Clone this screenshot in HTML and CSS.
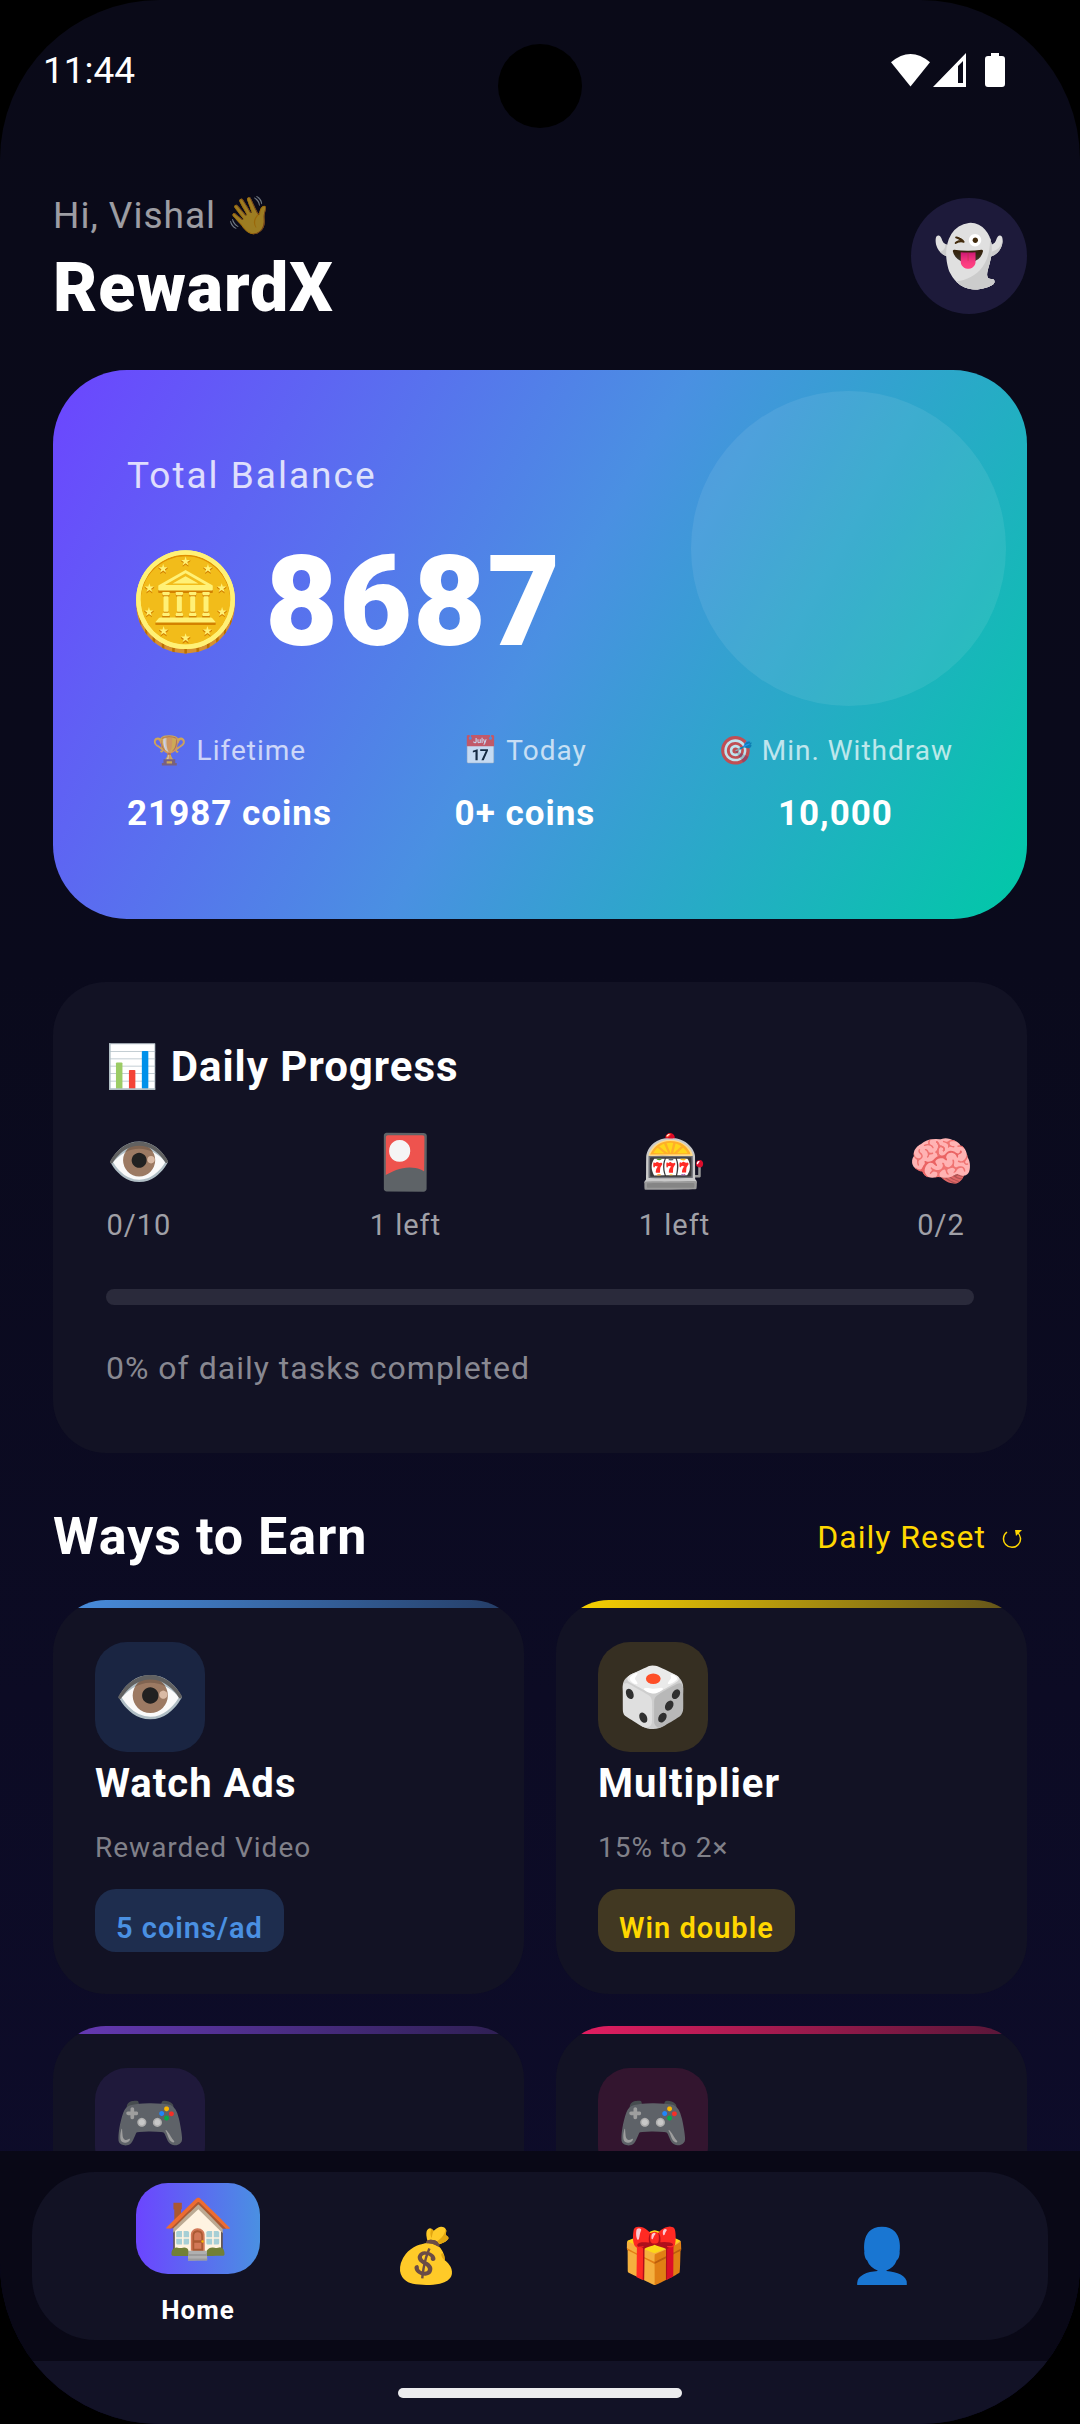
FILE: index.html
```html
<!DOCTYPE html>
<html lang="en">
<head>
    <meta charset="UTF-8">
    <meta name="viewport" content="width=device-width, initial-scale=1.0">
    <title>RewardX</title>
    <link rel="stylesheet" href="styles.css">
</head>
<body>
    <div class="screen">
        <div class="camera"></div>

        <div class="status-bar">
            <span class="time">11:44</span>
            <div class="status-icons">
                <svg class="wifi" viewBox="0 0 40 34"><path d="M20 34 L0 9 Q20 -8 40 9 Z" fill="#fff"/></svg>
                <svg class="signal" viewBox="0 0 33 34"><path fill-rule="evenodd" d="M33 0 V34 H0 Z M30 8 L25 13 V30 H30 Z" fill="#fff"/></svg>
                <svg class="battery" viewBox="0 0 20 34"><path d="M6 0 H14 V3 H17 Q20 3 20 6 V31 Q20 34 17 34 H3 Q0 34 0 31 V6 Q0 3 3 3 H6 Z" fill="#fff"/></svg>
            </div>
        </div>

        <main class="content">
            <header class="header">
                <div>
                    <p class="greeting">Hi, Vishal 👋</p>
                    <h1 class="app-name">RewardX</h1>
                </div>
                <button class="avatar" aria-label="Profile">👻</button>
            </header>

            <section class="balance-card">
                <p class="balance-label">Total Balance</p>
                <div class="balance-row">
                    <span class="coin">🪙</span>
                    <span class="balance-amount">8687</span>
                </div>
                <div class="stats">
                    <div class="stat">
                        <p class="stat-label">🏆 Lifetime</p>
                        <p class="stat-value">21987 coins</p>
                    </div>
                    <div class="stat">
                        <p class="stat-label">📅 Today</p>
                        <p class="stat-value">0+ coins</p>
                    </div>
                    <div class="stat">
                        <p class="stat-label">🎯 Min. Withdraw</p>
                        <p class="stat-value">10,000</p>
                    </div>
                </div>
            </section>

            <section class="progress-card">
                <h2 class="progress-title">📊 Daily Progress</h2>
                <div class="tasks">
                    <div class="task">
                        <span class="task-icon">👁️</span>
                        <span class="task-count">0/10</span>
                    </div>
                    <div class="task">
                        <span class="task-icon">🎴</span>
                        <span class="task-count">1 left</span>
                    </div>
                    <div class="task">
                        <span class="task-icon">🎰</span>
                        <span class="task-count">1 left</span>
                    </div>
                    <div class="task">
                        <span class="task-icon">🧠</span>
                        <span class="task-count">0/2</span>
                    </div>
                </div>
                <div class="progress-track">
                    <div class="progress-fill" style="width: 0%"></div>
                </div>
                <p class="progress-text">0% of daily tasks completed</p>
            </section>

            <div class="section-head">
                <h2 class="section-title">Ways to Earn</h2>
                <button class="reset">
                    Daily Reset
                    <svg class="reset-icon" viewBox="0 0 20 20"><path d="M5 3 A8.500 8.500 0 1 0 15 3" fill="none" stroke="#ffd700" stroke-width="1.500"/><path d="M13 1 H20 L14 7 Z" fill="#ffd700"/></svg>
                </button>
            </div>

            <div class="earn-grid">
                <a href="#" class="earn-card blue">
                    <span class="earn-icon">👁️</span>
                    <h3 class="earn-title">Watch Ads</h3>
                    <p class="earn-sub">Rewarded Video</p>
                    <span class="badge">5 coins/ad</span>
                </a>
                <a href="#" class="earn-card yellow">
                    <span class="earn-icon">🎲</span>
                    <h3 class="earn-title">Multiplier</h3>
                    <p class="earn-sub">15% to 2×</p>
                    <span class="badge">Win double</span>
                </a>
                <a href="#" class="earn-card purple">
                    <span class="earn-icon">🎮</span>
                </a>
                <a href="#" class="earn-card pink">
                    <span class="earn-icon">🎮</span>
                </a>
            </div>
        </main>

        <footer class="bottom">
            <nav class="tab-bar">
                <button class="tab active">
                    <span class="tab-icon">🏠</span>
                    <span class="tab-label">Home</span>
                </button>
                <button class="tab" aria-label="Wallet"><span class="tab-icon">💰</span></button>
                <button class="tab" aria-label="Rewards"><span class="tab-icon">🎁</span></button>
                <button class="tab" aria-label="Account"><span class="tab-icon">👤</span></button>
            </nav>
        </footer>
        <div class="gesture-bar"><div class="handle"></div></div>
    </div>
</body>
</html>
```
FILE: styles.css
```css
* {
    box-sizing: border-box;
    margin: 0;
    padding: 0;
}

body {
    background: #000;
    color: #fff;
    font-family: Roboto, "Noto Color Emoji", sans-serif;
    letter-spacing: 1px;
}

button {
    border: none;
    background: none;
    color: inherit;
    font: inherit;
    letter-spacing: inherit;
    cursor: pointer;
}

.screen {
    position: relative;
    display: flex;
    flex-direction: column;
    height: 100vh;
    overflow: hidden;
    border-radius: 160px;
    background: linear-gradient(#0a0a18, #0a0a1c 40%, #0e0c2c);
}

/* status bar */

.camera {
    position: absolute;
    top: 44px;
    left: 50%;
    width: 84px;
    height: 84px;
    margin-left: -42px;
    border-radius: 50%;
    background: #000;
}

.status-bar {
    display: flex;
    justify-content: space-between;
    align-items: center;
    height: 140px;
    padding: 0 75px 0 43px;
    flex-shrink: 0;
}

.time {
    font-size: 37px;
    letter-spacing: 0;
}

.status-icons {
    display: flex;
    align-items: center;
}

.wifi {
    width: 39px;
    height: 34px;
}

.signal {
    width: 33px;
    height: 34px;
    margin-left: 3px;
}

.battery {
    width: 20px;
    height: 34px;
    margin-left: 19px;
}

/* content */

.content {
    flex: 1;
    min-height: 0;
    overflow: hidden;
    padding: 48px 53px 0;
}

.header {
    display: flex;
    justify-content: space-between;
    align-items: flex-start;
    margin-bottom: 38px;
}

.greeting {
    font-size: 37px;
    line-height: 56px;
    opacity: 0.6;
}

.app-name {
    font-size: 68px;
    line-height: 88px;
    font-weight: 900;
}

.avatar {
    width: 116px;
    height: 116px;
    margin-top: 10px;
    border-radius: 50%;
    background: #1d1a3a;
    font-size: 58px;
    line-height: 116px;
    letter-spacing: 0;
}

.balance-card {
    position: relative;
    padding: 74px;
    margin-bottom: 63px;
    border-radius: 74px;
    background: linear-gradient(119deg, #6c45ff, #4a90e2 50%, #00c9a7);
}

.balance-card::before {
    content: "";
    position: absolute;
    top: 21px;
    right: 21px;
    width: 315px;
    height: 315px;
    border-radius: 50%;
    background: rgba(255, 255, 255, 0.08);
}

.balance-label {
    font-size: 37px;
    line-height: 64px;
    letter-spacing: 2px;
    opacity: 0.8;
}

.balance-row {
    display: flex;
    align-items: center;
    gap: 21px;
    margin: 20px 0 55px;
    line-height: 148px;
}

.coin {
    font-size: 94px;
    letter-spacing: 0;
}

.balance-amount {
    font-size: 126px;
    font-weight: 900;
}

.stats {
    display: flex;
    justify-content: space-between;
    text-align: center;
}

.stat-label {
    margin-bottom: 12px;
    font-size: 28px;
    line-height: 40px;
    opacity: 0.7;
}

.stat-value {
    font-size: 35px;
    line-height: 62px;
    font-weight: 700;
}

/* daily progress */

.progress-card {
    padding: 53px;
    margin-bottom: 52px;
    border-radius: 53px;
    background: #121224;
}

.progress-title {
    margin-bottom: 31px;
    font-size: 42px;
    line-height: 64px;
    font-weight: 700;
}

.tasks {
    display: flex;
    justify-content: space-between;
    margin-bottom: 44px;
}

.task {
    display: flex;
    flex-direction: column;
    align-items: center;
    gap: 11px;
}

.task-icon {
    font-size: 53px;
    line-height: 64px;
    letter-spacing: 0;
}

.task-count {
    color: #a0a0a7;
    font-size: 29px;
    line-height: 40px;
}

.progress-track {
    height: 16px;
    margin-bottom: 31px;
    border-radius: 8px;
    background: #2a2a3b;
    overflow: hidden;
}

.progress-fill {
    height: 100%;
    background: #4a90e2;
}

.progress-text {
    color: #888891;
    font-size: 32px;
    line-height: 64px;
}

/* ways to earn */

.section-head {
    display: flex;
    justify-content: space-between;
    align-items: center;
    margin-bottom: 31px;
}

.section-title {
    font-size: 52px;
    line-height: 64px;
    font-weight: 700;
}

.reset {
    display: flex;
    align-items: center;
    gap: 16px;
    padding-right: 5px;
    color: #ffd700;
    font-size: 32px;
    line-height: 44px;
}

.reset-icon {
    width: 20px;
    height: 20px;
    margin-top: 4px;
}

.earn-grid {
    display: grid;
    grid-template-columns: 1fr 1fr;
    gap: 32px;
}

.earn-card {
    position: relative;
    display: flex;
    flex-direction: column;
    align-items: flex-start;
    padding: 42px;
    border-radius: 53px;
    background: #121224;
    color: #fff;
    text-decoration: none;
    overflow: hidden;
}

.earn-card::before {
    content: "";
    position: absolute;
    top: 0;
    left: 0;
    right: 0;
    height: 8px;
    background: linear-gradient(90deg, var(--accent), var(--accent-end));
}

.blue {
    --accent: #4a90e2;
    --accent-end: #233a62;
    --icon-bg: #1a2542;
    --badge-bg: #1e2d4e;
}

.yellow {
    --accent: #ffd700;
    --accent-end: #5d4f1b;
    --icon-bg: #362f22;
    --badge-bg: #413822;
}

.purple {
    --accent: #673ab7;
    --accent-end: #2c1e4f;
    --icon-bg: #1f193b;
    --badge-bg: #231b42;
}

.pink {
    --accent: #e91e63;
    --accent-end: #531637;
    --icon-bg: #33152f;
    --badge-bg: #3d1531;
}

.earn-icon {
    width: 110px;
    height: 110px;
    border-radius: 32px;
    background: var(--icon-bg);
    font-size: 58px;
    line-height: 110px;
    letter-spacing: 0;
    text-align: center;
}

.earn-title {
    margin-bottom: 10px;
    font-size: 40px;
    line-height: 64px;
    font-weight: 700;
}

.earn-sub {
    margin-bottom: 19px;
    color: #808089;
    font-size: 28px;
    line-height: 44px;
}

.badge {
    padding: 19px 21px 4px;
    border-radius: 21px;
    background: var(--badge-bg);
    color: var(--accent);
    font-size: 29px;
    line-height: 40px;
    font-weight: 600;
}

/* bottom navigation */

.bottom {
    flex-shrink: 0;
    padding: 21px 32px;
    background: #090816;
}

.tab-bar {
    display: flex;
    justify-content: space-evenly;
    align-items: center;
    height: 168px;
    border-radius: 63px;
    background: #121224;
}

.tab {
    display: flex;
    flex-direction: column;
    align-items: center;
    gap: 16px;
    width: 124px;
}

.tab-icon {
    font-size: 53px;
    line-height: 91px;
    letter-spacing: 0;
}

.tab.active .tab-icon {
    width: 124px;
    border-radius: 32px;
    background: linear-gradient(90deg, #6c45ff, #4a90e2);
    font-size: 58px;
}

.tab-label {
    font-size: 26px;
    line-height: 40px;
    font-weight: 700;
}

.gesture-bar {
    display: flex;
    justify-content: center;
    align-items: center;
    height: 63px;
    flex-shrink: 0;
    background: #121226;
}

.handle {
    width: 284px;
    height: 10px;
    border-radius: 5px;
    background: #ececee;
}
```
